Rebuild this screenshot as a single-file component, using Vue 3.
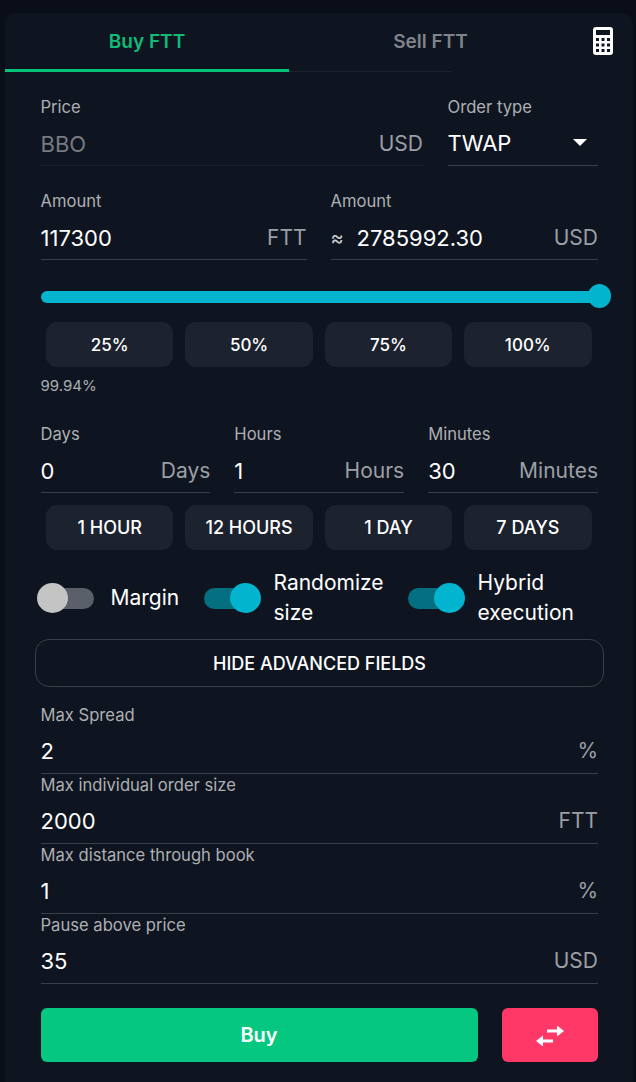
<script setup>
const quick = ['25%', '50%', '75%', '100%']
const spans = ['1 HOUR', '12 HOURS', '1 DAY', '7 DAYS']
const durations = [
  { label: 'Days', value: '0', unit: 'Days' },
  { label: 'Hours', value: '1', unit: 'Hours' },
  { label: 'Minutes', value: '30', unit: 'Minutes' }
]
const advanced = [
  { label: 'Max Spread', value: '2', unit: '%' },
  { label: 'Max individual order size', value: '2000', unit: 'FTT' },
  { label: 'Max distance through book', value: '1', unit: '%' },
  { label: 'Pause above price', value: '35', unit: 'USD' }
]
const toggles = [
  { lines: ['Margin'], on: false },
  { lines: ['Randomize', 'size'], on: true },
  { lines: ['Hybrid', 'execution'], on: true }
]
</script>

<template>
  <div class="page">
    <section class="card">
      <header class="tabs">
        <div class="tab tab-active">Buy FTT</div>
        <div class="tab tab-idle">Sell FTT</div>
        <svg class="calc" viewBox="0 0 20 28" width="20" height="28" aria-hidden="true">
          <path fill="#fff" fill-rule="evenodd" d="M3 0h14a3 3 0 0 1 3 3v22a3 3 0 0 1-3 3H3a3 3 0 0 1-3-3V3a3 3 0 0 1 3-3zM3 3v5h14V3zM3 11v3h3v-3zM8.500 11v3h3v-3zM14 11v3h3v-3zM3 16.500v3h3v-3zM8.500 16.500v3h3v-3zM14 16.500v3h3v-3zM3 22v3h3v-3zM8.500 22v3h3v-3zM14 22v3h3v-3z"/>
        </svg>
      </header>

      <div class="form">
        <div class="row price-row">
          <div class="field field-grow">
            <label class="label">Price</label>
            <div class="control faint-line">
              <span class="value muted">BBO</span>
              <span class="unit">USD</span>
            </div>
          </div>
          <div class="field order-type">
            <label class="label">Order type</label>
            <div class="control control-select">
              <span class="value">TWAP</span>
              <span class="caret"></span>
            </div>
          </div>
        </div>

        <div class="row amount-row">
          <div class="field amount-first">
            <label class="label">Amount</label>
            <div class="control">
              <span class="value">117300</span>
              <span class="unit">FTT</span>
            </div>
          </div>
          <div class="field field-grow">
            <label class="label">Amount</label>
            <div class="control">
              <span class="approx">≈</span>
              <span class="value">2785992.30</span>
              <span class="unit">USD</span>
            </div>
          </div>
        </div>

        <div class="slider">
          <div class="thumb"></div>
        </div>

        <div class="chips chips-first">
          <button v-for="q in quick" :key="q" class="chip chip-pct">{{ q }}</button>
        </div>
        <div class="percent">99.94%</div>

        <div class="row duration-row">
          <div v-for="d in durations" :key="d.label" class="field field-grow">
            <label class="label">{{ d.label }}</label>
            <div class="control">
              <span class="value">{{ d.value }}</span>
              <span class="unit">{{ d.unit }}</span>
            </div>
          </div>
        </div>

        <div class="chips chips-second">
          <button v-for="s in spans" :key="s" class="chip">{{ s }}</button>
        </div>

        <div class="toggles">
          <div v-for="t in toggles" :key="t.lines[0]" class="toggle-item">
            <span class="switch" :class="{ on: t.on }"><span class="knob"></span></span>
            <span class="toggle-label"><span v-for="l in t.lines" :key="l" class="line">{{ l }}</span></span>
          </div>
        </div>

        <button class="advanced">HIDE ADVANCED FIELDS</button>

        <div class="adv-fields">
          <div v-for="a in advanced" :key="a.label" class="field">
            <label class="label">{{ a.label }}</label>
            <div class="control">
              <span class="value">{{ a.value }}</span>
              <span class="unit">{{ a.unit }}</span>
            </div>
          </div>
        </div>

        <div class="actions">
          <button class="buy">Buy</button>
          <button class="swap" aria-label="Switch side">
            <svg viewBox="0 0 28 22" width="28" height="22" aria-hidden="true">
              <path fill="#fff" d="M11 5.500h10V1.500l7 5.500-7 5.500V8.500H11zM17 15.500H7v-4l-7 5.500 7 5.500v-4h10z"/>
            </svg>
          </button>
        </div>
      </div>
    </section>
  </div>
</template>

<style>
html, body { margin: 0; background: #0a0e18; }
</style>

<style scoped>
* { box-sizing: border-box; }
.page {
  width: 636px;
  height: 1082px;
  padding: 13px 3px 0 5px;
  background: #0a0e18;
  font-family: Inter, "Noto Sans", sans-serif;
  overflow: hidden;
}
.card {
  height: 1069px;
  background: #0f1520;
  border-radius: 12px 12px 0 0;
}
.tabs {
  position: relative;
  display: flex;
  height: 59px;
}
.tab {
  width: 284px;
  height: 59px;
  padding-top: 17px;
  text-align: center;
  font-size: 19px;
  line-height: 24px;
  font-weight: 600;
}
.tab-active {
  color: #10bb78;
  border-bottom: 3px solid #05c27a;
}
.tab-idle {
  width: 283px;
  color: #7f838b;
  position: relative;
}
.tab-idle::after {
  content: "";
  position: absolute;
  left: 0;
  bottom: 0;
  width: 163px;
  height: 1px;
  background: #1d222e;
}
.calc {
  position: absolute;
  left: 588px;
  top: 14px;
}
.form {
  padding: 0 35px 0 35.500px;
}
.row {
  display: flex;
}
.field {
  display: flex;
  flex-direction: column;
  min-width: 0;
}
.field-grow { flex: 1 1 0; }
.amount-first { flex: none; width: 266px; }
.label {
  height: 20px;
  font-size: 16.600px;
  line-height: 20px;
  color: #adafb3;
}
.control {
  display: flex;
  align-items: center;
  height: 49px;
  padding-top: 5px;
  border-bottom: 1px solid #3a3e48;
  font-size: 22px;
  line-height: 28px;
  color: #fff;
}
.control-select { padding-top: 3px; }
.faint-line { border-bottom-color: #1b202b; }
.value { flex: 1 1 auto; }
.muted { color: #777a81; }
.unit {
  font-size: 21px;
  color: #9c9fa5;
}
.approx {
  width: 26px;
  font-size: 20px;
  color: #c9cacc;
}
.caret {
  width: 0;
  height: 0;
  margin-right: 11px;
  border-left: 7.500px solid transparent;
  border-right: 7.500px solid transparent;
  border-top: 7.500px solid #fff;
}
.price-row { margin-top: 25px; gap: 24.500px; }
.order-type { width: 150.500px; flex: none; }
.amount-row { margin-top: 25px; gap: 24px; }
.slider {
  position: relative;
  height: 12px;
  margin-top: 31px;
  margin-right: -2px;
  border-radius: 6px;
  background: #02b4cd;
}
.thumb {
  position: absolute;
  right: -11px;
  top: -7px;
  width: 23px;
  height: 24px;
  border-radius: 50%;
  background: #02b4cd;
}
.chips {
  display: flex;
  gap: 12px;
  padding: 0 6.500px 0 5.500px;
}
.chips-first { margin-top: 19px; }
.chips-second { margin-top: 12px; }
.chip {
  flex: 1 1 0;
  height: 45px;
  border: 0;
  border-radius: 11px;
  background: #1c222e;
  color: #fff;
  font-family: inherit;
  font-size: 18px;
  font-weight: 500;
}
.chip-pct { font-size: 17px; }
.percent {
  margin-top: 9px;
  font-size: 15px;
  line-height: 20px;
  color: #adafb3;
}
.duration-row { margin-top: 28px; gap: 24px; }
.toggles {
  display: flex;
  align-items: center;
  height: 60px;
  margin-top: 18px;
  margin-left: -4px;
}
.toggle-item {
  display: flex;
  align-items: center;
}
.toggle-item:nth-child(1) { width: 163px; }
.toggle-item:nth-child(2) { width: 204px; }
.switch {
  position: relative;
  display: block;
  flex: none;
  width: 53px;
  height: 21px;
  margin-left: 4px;
  border-radius: 11px;
  background: #5b5f69;
}
.switch.on { background: #046f80; }
.knob {
  position: absolute;
  left: -4px;
  top: -5px;
  width: 31px;
  height: 30px;
  border-radius: 50%;
  background: #c4c4c4;
}
.switch.on .knob {
  left: 26px;
  background: #02b4cd;
}
.toggle-label {
  margin-left: 17px;
  font-size: 21px;
  line-height: 30px;
  color: #fff;
}
.line { display: block; }
.advanced {
  display: block;
  width: 569px;
  height: 48px;
  margin-top: 11px;
  margin-left: -5.500px;
  border: 1px solid #3a3e48;
  border-radius: 14px;
  background: transparent;
  color: #fff;
  font-family: inherit;
  font-size: 18px;
  font-weight: 500;
}
.adv-fields {
  display: flex;
  flex-direction: column;
  margin-top: 18px;
}
.adv-fields .control {
  margin-bottom: 1px;
  padding-top: 3px;
}
.actions {
  display: flex;
  justify-content: space-between;
  margin-top: 23px;
}
.buy {
  width: 437px;
  height: 54px;
  border: 0;
  border-radius: 6px;
  background: #05c77f;
  color: #fff;
  font-family: inherit;
  font-size: 20px;
  font-weight: 600;
}
.swap {
  display: flex;
  align-items: center;
  justify-content: center;
  width: 96px;
  height: 54px;
  border: 0;
  border-radius: 6px;
  background: #ff3867;
}
</style>
